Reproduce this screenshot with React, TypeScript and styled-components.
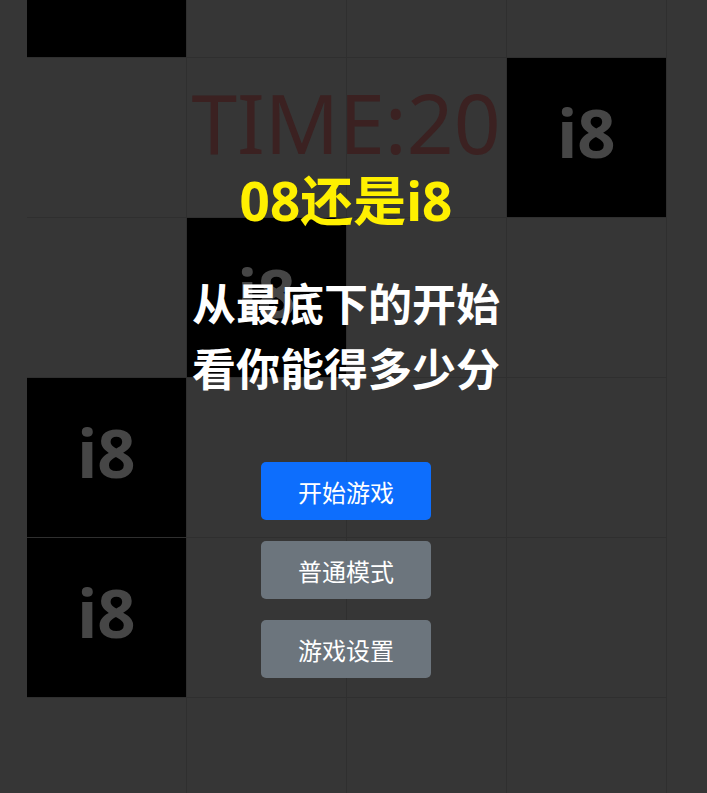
import React from "react";
import styled, { createGlobalStyle } from "styled-components";

const GlobalStyle = createGlobalStyle`
  html, body {
    margin: 0;
    padding: 0;
    background: #363636;
    overflow: hidden;
  }
  body {
    font-family: "Noto Sans", "Noto Sans CJK SC", sans-serif;
  }
`;

const Page = styled.div`
  position: relative;
  width: 707px;
  height: 793px;
  overflow: hidden;
  background: #363636;
`;

const Board = styled.div`
  display: grid;
  grid-template-columns: repeat(4, 160px);
  grid-auto-rows: 160px;
  width: 640px;
  margin-left: 27px;
  margin-top: -102px;
`;

const Cell = styled.div<{ $black?: boolean }>`
  box-sizing: border-box;
  display: flex;
  align-items: center;
  justify-content: center;
  padding-bottom: 12px;
  background: ${(p) => (p.$black ? "#000" : "#363636")};
  border-right: 1px solid #2f2f2f;
  border-bottom: 1px solid #2f2f2f;
  color: #464646;
  font-family: "Noto Sans", "Open Sans", sans-serif;
  font-weight: 700;
  font-size: 67px;
`;

const Overlay = styled.div`
  position: absolute;
  top: 0;
  bottom: 0;
  left: 26px;
  width: 640px;
  display: flex;
  flex-direction: column;
  align-items: center;
  padding-top: 81px;
`;

const Time = styled.div`
  font-family: "Noto Sans", "Noto Sans CJK SC", sans-serif;
  font-size: 82px;
  line-height: 82px;
  color: #3b2121;
`;

const Title = styled.div`
  margin-top: 11px;
  font-family: "Noto Sans", "Noto Sans CJK SC", sans-serif;
  font-weight: 700;
  font-size: 53px;
  line-height: 53px;
  color: #fff000;
`;

const Intro = styled.div`
  margin-top: 43px;
  font-family: "Noto Sans CJK SC", sans-serif;
  font-weight: 700;
  font-size: 44px;
  line-height: 65px;
  color: #fff;
  text-align: center;
`;

const Menu = styled.div`
  margin-top: 62px;
  display: flex;
  flex-direction: column;
  gap: 21px;
`;

const Button = styled.button<{ $primary?: boolean }>`
  width: 170px;
  height: 58px;
  border: none;
  border-radius: 5px;
  background: ${(p) => (p.$primary ? "#0d6efd" : "#6c757d")};
  color: #fff;
  font-family: "Noto Sans CJK SC", sans-serif;
  font-size: 24px;
  cursor: pointer;
`;

// column of the black tile in each row, and whether its label shows
const rows: { col: number; label: boolean }[] = [
  { col: 0, label: false },
  { col: 3, label: true },
  { col: 1, label: true },
  { col: 0, label: true },
  { col: 0, label: true },
  { col: -1, label: false },
];

export default function App() {
  return (
    <Page>
      <GlobalStyle />
      <Board>
        {rows.map((row, r) =>
          [0, 1, 2, 3].map((c) => (
            <Cell key={`${r}-${c}`} $black={c === row.col}>
              {c === row.col && row.label ? "i8" : ""}
            </Cell>
          ))
        )}
      </Board>
      <Overlay>
        <Time>TIME:20</Time>
        <Title>08还是i8</Title>
        <Intro>
          从最底下的开始
          <br />
          看你能得多少分
        </Intro>
        <Menu>
          <Button $primary>开始游戏</Button>
          <Button>普通模式</Button>
          <Button>游戏设置</Button>
        </Menu>
      </Overlay>
    </Page>
  );
}
